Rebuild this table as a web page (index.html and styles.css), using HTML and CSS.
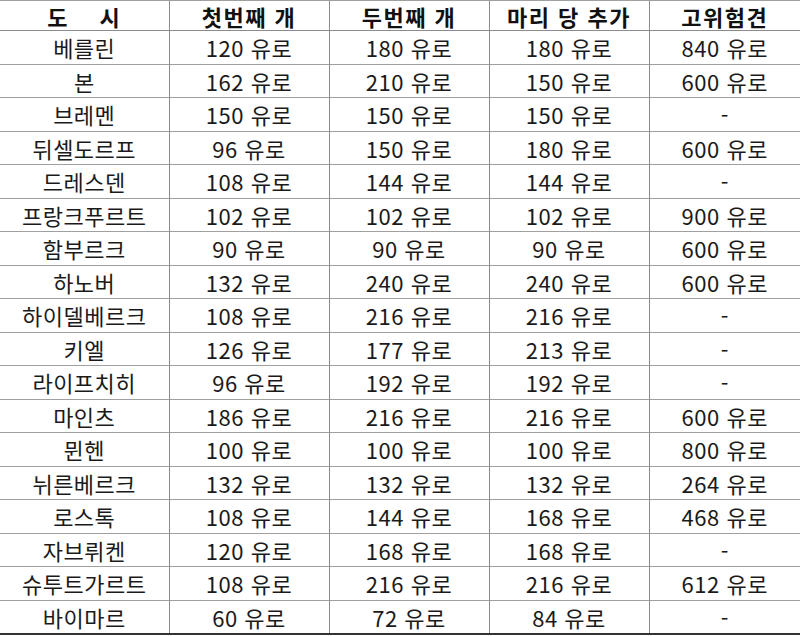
FILE: index.html
```html
<!DOCTYPE html>
<html lang="ko">
<head>
<meta charset="utf-8">
<link rel="stylesheet" href="styles.css">
</head>
<body>
<table class="fees">
<colgroup>
<col class="c1"><col class="c2"><col class="c3"><col class="c4"><col class="c5">
</colgroup>
<thead>
<tr><th class="city-h">도&nbsp;&nbsp;&nbsp;&nbsp;시</th><th>첫번째 개</th><th>두번째 개</th><th>마리 당 추가</th><th>고위험견</th></tr>
</thead>
<tbody>
<tr><td>베를린</td><td>120 유로</td><td>180 유로</td><td>180 유로</td><td>840 유로</td></tr>
<tr><td>본</td><td>162 유로</td><td>210 유로</td><td>150 유로</td><td>600 유로</td></tr>
<tr><td>브레멘</td><td>150 유로</td><td>150 유로</td><td>150 유로</td><td>-</td></tr>
<tr><td>뒤셀도르프</td><td>96 유로</td><td>150 유로</td><td>180 유로</td><td>600 유로</td></tr>
<tr><td>드레스덴</td><td>108 유로</td><td>144 유로</td><td>144 유로</td><td>-</td></tr>
<tr><td>프랑크푸르트</td><td>102 유로</td><td>102 유로</td><td>102 유로</td><td>900 유로</td></tr>
<tr><td>함부르크</td><td>90 유로</td><td>90 유로</td><td>90 유로</td><td>600 유로</td></tr>
<tr><td>하노버</td><td>132 유로</td><td>240 유로</td><td>240 유로</td><td>600 유로</td></tr>
<tr><td>하이델베르크</td><td>108 유로</td><td>216 유로</td><td>216 유로</td><td>-</td></tr>
<tr><td>키엘</td><td>126 유로</td><td>177 유로</td><td>213 유로</td><td>-</td></tr>
<tr><td>라이프치히</td><td>96 유로</td><td>192 유로</td><td>192 유로</td><td>-</td></tr>
<tr><td>마인츠</td><td>186 유로</td><td>216 유로</td><td>216 유로</td><td>600 유로</td></tr>
<tr><td>뮌헨</td><td>100 유로</td><td>100 유로</td><td>100 유로</td><td>800 유로</td></tr>
<tr><td>뉘른베르크</td><td>132 유로</td><td>132 유로</td><td>132 유로</td><td>264 유로</td></tr>
<tr><td>로스톡</td><td>108 유로</td><td>144 유로</td><td>168 유로</td><td>468 유로</td></tr>
<tr><td>자브뤼켄</td><td>120 유로</td><td>168 유로</td><td>168 유로</td><td>-</td></tr>
<tr><td>슈투트가르트</td><td>108 유로</td><td>216 유로</td><td>216 유로</td><td>612 유로</td></tr>
<tr><td>바이마르</td><td>60 유로</td><td>72 유로</td><td>84 유로</td><td>-</td></tr>
</tbody>
</table>
</body>
</html>
```

FILE: styles.css
```css
html, body {
  margin: 0;
  padding: 0;
  background: #ffffff;
}

body {
  font-family: "Noto Sans CJK KR", "Noto Sans", sans-serif;
  color: #1a1a1a;
}

.fees {
  width: 800px;
  table-layout: fixed;
  border-collapse: collapse;
  border-top: 1px solid #333333;
  border-bottom: 2px solid #333333;
}

.c1 { width: 169px; }
.c2 { width: 160px; }
.c3 { width: 160px; }
.c4 { width: 160px; }
.c5 { width: 151px; }

.fees th,
.fees td {
  padding: 0;
  text-align: center;
  vertical-align: middle;
  border-left: 1px solid #8c8c8c;
  border-top: 1px solid #a0a0a0;
  white-space: nowrap;
  line-height: 1;
}

.fees th:first-child,
.fees td:first-child {
  border-left: none;
}

.fees th {
  height: 29px;
  font-size: 22px;
  font-weight: 700;
  letter-spacing: 1.5px;
  color: #111111;
}

.fees td {
  height: 32.5px;
  font-size: 22px;
  font-weight: 400;
  letter-spacing: 0.5px;
}

.fees tbody tr:first-child td {
  border-top: 1px solid #8c8c8c;
}
```
